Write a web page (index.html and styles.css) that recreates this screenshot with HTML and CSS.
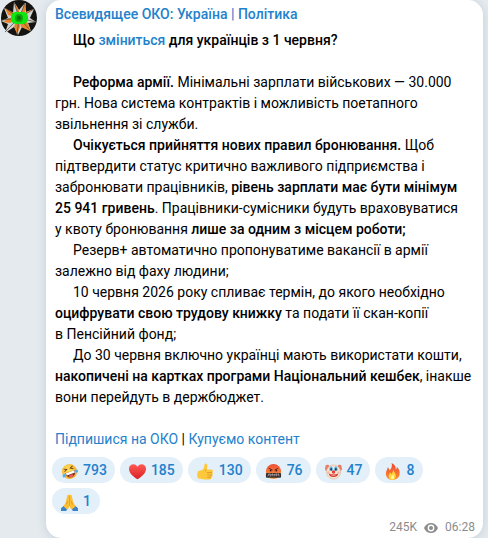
FILE: index.html
```
<!DOCTYPE html>
<html lang="uk">
<head>
    <meta charset="UTF-8">
    <meta name="viewport" content="width=device-width, initial-scale=1.0">
    <title>Всевидящее ОКО: Україна | Політика</title>
    <link rel="stylesheet" href="styles.css">
</head>
<body>

<main class="post">
    <a class="avatar" href="#" aria-label="Всевидящее ОКО">
        <svg viewBox="0 0 36 36" aria-hidden="true">
            <circle cx="18" cy="18" r="18" fill="#15130f"/>
            <path d="M13 2l5 8 6-7 1 9 8-3-4 9 6 4-8 1 3 8-9-4-4 8-4-8-9 6 3-9-7-3 7-3-4-10 9 5z" fill="#d0d2d2"/>
            <path d="M13 2l5 8 0 8zM25 3l-1 9-6 6 6-15M33 9l-8 3-7 6zM29 31l-9-4-2-9 9 5zM16 34l-3-8 5-8 1 9zM2 22l6-4 10 0-9 5zM4 8l9 5 5 5-11-3z" fill="#e5842a"/>
            <path d="M18 18L13 2M18 18L24 3M18 18L33 9M18 18l17 4M18 18l12 13M18 18l-2 17M18 18L4 32M18 18L1 20M18 18L4 8" stroke="#48423b" stroke-width=".7"/>
            <rect x="10" y="12" width="17" height="12" rx="5" fill="#10e60f"/>
            <circle cx="18" cy="18" r="4" fill="#0aa80a"/>
            <circle cx="18" cy="18" r="2" fill="#077008"/>
        </svg>
    </a>

    <article class="bubble">
        <a class="author" href="#">Всевидящее ОКО: Україна | Політика</a>

        <div class="text">
            <p><b>Що <a href="#">зміниться</a> для українців з 1 червня?</b></p>
            <br>
            <p><b>Реформа армії.</b> Мінімальні зарплати військових — 30.000 грн. Нова система контрактів і можливість поетапного звільнення зі служби.</p>
            <p><b>Очікується прийняття нових правил бронювання.</b> Щоб підтвердити статус критично важливого підприємства і забронювати працівників, <b>рівень зарплати має бути мінімум 25&nbsp;941 гривень</b>. Працівники-сумісники будуть враховуватися у&nbsp;квоту бронювання <b>лише за одним з місцем роботи;</b></p>
            <p>Резерв+ автоматично пропонуватиме вакансії в армії залежно від фаху людини;</p>
            <p>10 червня 2026 року спливає термін, до якого необхідно <b>оцифрувати свою трудову книжку</b> та подати її скан-копії в&nbsp;Пенсійний фонд;</p>
            <p>До 30 червня включно українці мають використати кошти, <b>накопичені на картках програми Національний кешбек</b>, інакше вони перейдуть в держбюджет.</p>
            <br>
            <p class="links"><a href="#">Підпишися на ОКО</a> | <a href="#">Купуємо контент</a></p>
        </div>

        <div class="reactions">
            <button class="reaction" type="button">
                <svg viewBox="0 0 18 18" aria-hidden="true">
                    <defs>
                        <radialGradient id="face" cx=".45" cy=".35" r=".7">
                            <stop offset="0" stop-color="#ffe45c"/>
                            <stop offset="1" stop-color="#f2a32c"/>
                        </radialGradient>
                    </defs>
                    <g transform="rotate(-20 9 9)">
                        <circle cx="9" cy="9" r="8" fill="url(#face)"/>
                        <path d="M4 9.500h10.500c0 8-10.500 8-10.500 0z" fill="#6b2c17"/>
                        <path d="M4.500 9.500h9.500v2.500H5z" fill="#fff"/>
                        <path d="M6 14c2-2 5-2 6 0-1.500 1.700-4.500 1.700-6 0z" fill="#ef5b5b"/>
                        <path d="M4 4.500l3 1.500-3 1.500M14 4.500L11 6l3 1.500" fill="none" stroke="#6b3a12" stroke-width="1"/>
                        <path d="M4 9.500c-3 0-4 1-3.500 3 2 1 4 0 3.500-3zM14.500 9.500c3 0 4 1 3.500 3-2 1-4 0-3.500-3z" fill="#4fb2ec"/>
                    </g>
                </svg>
                793
            </button>
            <button class="reaction" type="button">
                <svg viewBox="0 0 18 18" aria-hidden="true">
                    <defs>
                        <linearGradient id="heart" x2="0" y2="1">
                            <stop offset="0" stop-color="#ff5953"/>
                            <stop offset="1" stop-color="#d91e25"/>
                        </linearGradient>
                    </defs>
                    <path d="M9 17.300C4 14 0 10.500 0 6c0-5 6.500-6.500 9-2 2.500-4.500 9-3 9 2 0 4.500-4 8-9 11.300z" fill="url(#heart)"/>
                </svg>
                185
            </button>
            <button class="reaction" type="button">
                <svg viewBox="0 0 18 18" aria-hidden="true">
                    <path d="M1 9c2-1 4-1 5-2 1.500-1.500 1.500-3 2-5.500C8.300 0 11 .4 11 3c0 1.500-.5 3-.8 4H15c2 0 2.500 2 1.200 3 1 .8.800 2.200-.2 2.700.7 1 .2 2.200-.8 2.500.3 1.300-.4 2.300-2 2.300H8c-2 0-3-1-7-1-1-2-1-6 0-7.500z" fill="#fdc83b"/>
                    <path d="M10.500 10.200h5.500M11 12.800h5M11 15.200h4" stroke="#d98c1f" stroke-width=".8"/>
                    <path d="M10.200 7c-1.500 0-1.700 1-1.200 2" fill="none" stroke="#e49b27" stroke-width=".8"/>
                </svg>
                130
            </button>
            <button class="reaction" type="button">
                <svg viewBox="0 0 18 18" aria-hidden="true">
                    <defs>
                        <linearGradient id="rage" x2="0" y2="1">
                            <stop offset="0" stop-color="#ef4d35"/>
                            <stop offset="1" stop-color="#f79a3c"/>
                        </linearGradient>
                    </defs>
                    <circle cx="9" cy="9" r="8" fill="url(#rage)"/>
                    <path d="M4 5.500l4 2M14 5.500l-4 2" stroke="#5a1f12" stroke-width=".9"/>
                    <circle cx="6" cy="8" r="1" fill="#4a1b10"/>
                    <circle cx="12" cy="8" r="1" fill="#4a1b10"/>
                    <rect x="1" y="10.500" width="16" height="5" rx="1" fill="#38302f"/>
                    <path d="M3 14l1.500-3M6 11.500c-2 1 1 1.500-.5 3M8 11l-.5 3M10.500 11.500l-1 2.500M12 11v3M14 11l1 3M3 12.500h12" fill="none" stroke="#c9c1bd" stroke-width=".6"/>
                </svg>
                76
            </button>
            <button class="reaction" type="button">
                <svg viewBox="0 0 18 18" aria-hidden="true">
                    <path d="M4 2C1 1 0 3 .5 4.500-.5 6 0 8 2 8.500L5 6zM14 2c3-1 4 1 3.500 2.500C18.500 6 18 8 16 8.500L13 6z" fill="#e87a66"/>
                    <circle cx="9" cy="9.500" r="7.500" fill="#f5e6d3" stroke="#dcb48c" stroke-width=".6"/>
                    <path d="M4.500 8c0-6 4-6 4 0zM9.500 8c0-6 4-6 4 0z" fill="#62b3e8"/>
                    <ellipse cx="6.500" cy="6.800" rx=".9" ry="1.500" fill="#263445"/>
                    <ellipse cx="11.500" cy="6.800" rx=".9" ry="1.500" fill="#263445"/>
                    <path d="M4 11c3 1.500 7 1.500 10 0 0 5-10 5-10 0z" fill="#d6302a"/>
                    <path d="M5.500 12.200c2 1 5 1 7 0-1 1.600-6 1.600-7 0z" fill="#fff"/>
                    <circle cx="9" cy="9.500" r="1.800" fill="#ee3b32"/>
                    <circle cx="3.500" cy="10" r="1.300" fill="#f5b5a8"/>
                    <circle cx="14.500" cy="10" r="1.300" fill="#f5b5a8"/>
                </svg>
                47
            </button>
            <button class="reaction" type="button">
                <svg viewBox="0 0 18 18" aria-hidden="true">
                    <defs>
                        <linearGradient id="fire" x2="0" y2="1">
                            <stop offset="0" stop-color="#f0442e"/>
                            <stop offset="1" stop-color="#fb9030"/>
                        </linearGradient>
                    </defs>
                    <path d="M8 0c4 2 4.500 4.500 4.500 7 1-.7 1.200-2 1-3 2.500 2.500 3.500 5 3 8-.5 4-4 6-7.500 6-4 0-7-2.500-7-6.500 0-3 1.500-4.500 2-7 1 .8 1.700 2 1.700 3.500C8 6 9 3 8 0z" fill="url(#fire)"/>
                    <path d="M9.500 6c0 3 3 4 3 7.500 0 3-1.500 4.500-3.700 4.500C6.500 18 5 16.500 5 14c0-2 1-2.500 1.300-4 1 .5 1.300 1 1.400 2C9 10.500 10 8.500 9.500 6z" fill="#ffd43b"/>
                    <path d="M9.500 12c1 1.500 1.500 2.500 1 4-.5 1.500-3 1.500-3.200 0-.3-1.500 1.700-2 2.200-4z" fill="#fff5a8"/>
                </svg>
                8
            </button>
            <button class="reaction" type="button">
                <svg viewBox="0 0 18 18" aria-hidden="true">
                    <path d="M0 15l3-2.500 4 2.500-1.500 3H0zM18 15l-3-2.500-4 2.500 1.500 3H18z" fill="#3b82c9"/>
                    <path d="M8.700 1C7 0 6.500 1.500 6.200 3.500L5 9l-2.500 4 4 3.500c2-1 2.300-3 2.300-5zM9.300 1c1.700-1 2.200.5 2.500 2.500L13 9l2.500 4-4 3.500c-2-1-2.300-3-2.300-5z" fill="#fdbf35"/>
                    <path d="M9 1.500v11M7 7.500L6 11M11 7.500l1 3.500" stroke="#d58a1c" stroke-width=".7"/>
                </svg>
                1
            </button>
        </div>

        <footer class="meta">
            <span>245K</span>
            <svg viewBox="0 0 16 12" role="img" aria-label="Перегляди">
                <path d="M8 1C4.800 1 2.200 3 1 6c1.200 3 3.800 5 7 5s5.800-2 7-5c-1.200-3-3.800-5-7-5z" fill="#8c8c8c"/>
                <circle cx="8" cy="6" r="3.400" fill="#fff"/>
                <circle cx="8" cy="6" r="2" fill="#8c8c8c"/>
            </svg>
            <time datetime="06:28">06:28</time>
        </footer>
    </article>
</main>

</body>
</html>
```
FILE: styles.css
```
body {
    margin: 0;
    background-color: #e4eaee;
    font-family: Roboto, sans-serif;
    font-size: 14px;
    line-height: 21px;
    color: #000;
}
a {
    color: #2481cc;
    text-decoration: none;
}
.post {
    display: flex;
    align-items: flex-start;
    gap: 9px;
    padding-left: 1px;
    padding-right: 5px;
}
.avatar {
    flex: none;
    width: 36px;
    height: 36px;
}
.avatar svg {
    display: block;
    width: 36px;
    height: 36px;
}
.bubble {
    flex: 1;
    min-width: 0;
    box-sizing: border-box;
    padding: 4px 8px 0 9px;
    background-color: #fff;
    border-radius: 15px;
    box-shadow: 0 1px 8px rgba(110, 130, 150, 0.25);
}
.author {
    display: block;
    font-weight: 500;
}
.text {
    margin-top: 5px;
}
.text p {
    margin: 0;
    text-indent: 18px;
}
.text .links {
    text-indent: 0;
}
.text b {
    font-weight: 500;
}
.reactions {
    display: flex;
    flex-wrap: wrap;
    gap: 5px;
    margin: 7px 0 0 -3px;
    padding-right: 40px;
}
.reaction {
    display: flex;
    align-items: center;
    gap: 5px;
    height: 26px;
    min-width: 48px;
    padding: 0 8px 0 9px;
    border: none;
    border-radius: 13px;
    background-color: #e3eff9;
    color: #2481cc;
    font-family: inherit;
    font-size: 14px;
    font-weight: 500;
    cursor: pointer;
}
.reaction svg {
    width: 17px;
    height: 17px;
    margin-top: 3px;
}
.meta {
    display: flex;
    justify-content: flex-end;
    align-items: center;
    gap: 6px;
    margin-top: 3px;
    font-size: 12px;
    color: #8c8c8c;
}
.meta svg {
    width: 16px;
    height: 12px;
}
```
